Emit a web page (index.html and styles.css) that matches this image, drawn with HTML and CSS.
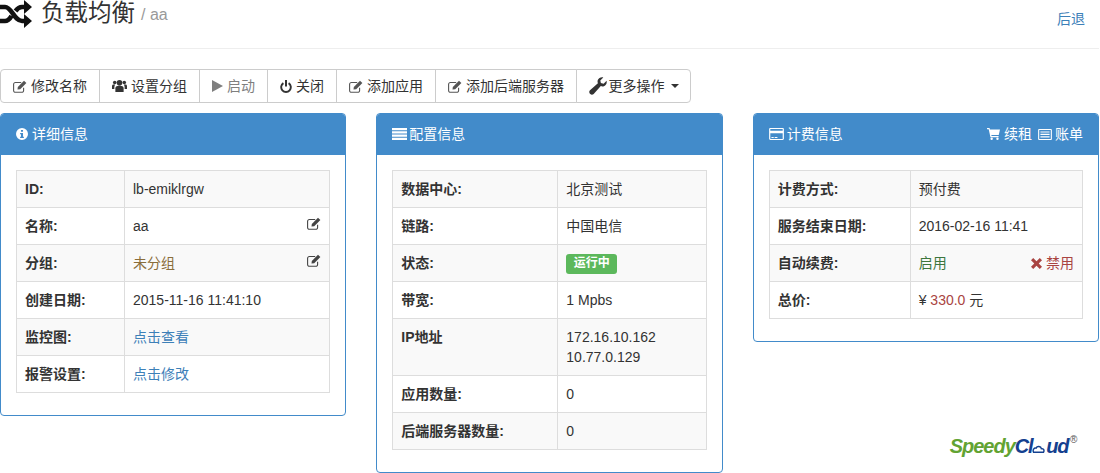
FILE: index.html
```html
<!DOCTYPE html>
<html lang="zh-CN">
<head>
<meta charset="utf-8">
<title>负载均衡</title>
<link rel="stylesheet" href="styles.css">
</head>
<body>
<svg class="defs" width="0" height="0" aria-hidden="true">
  <symbol id="i-edit" viewBox="0 0 14 13">
    <path d="M10.600 7.800v2.700a1.800 1.800 0 0 1-1.800 1.800H2.400a1.800 1.800 0 0 1-1.800-1.800V4.300a1.800 1.800 0 0 1 1.800-1.800h5.800" fill="none" stroke="currentColor" stroke-width="1.100"/>
    <path d="M4.800 6.900 11 .7l2.400 2.400-6.200 6.200-2.700.3z" fill="currentColor"/>
  </symbol>
  <symbol id="i-users" viewBox="0 0 16 14">
    <circle cx="8" cy="3.600" r="3"/><circle cx="2.900" cy="3.200" r="1.900"/><circle cx="13.100" cy="3.200" r="1.900"/>
    <path d="M3.600 13.500V9.600c0-1.800 1.200-2.600 2.200-2.600h4.400c1 0 2.200.8 2.200 2.600v3.900z"/>
    <path d="M0 10.300V7.200c0-1 .7-1.700 1.500-1.700h2c-.7.8-1 2-1 3.200v1.600zM16 10.300V7.200c0-1-.7-1.700-1.500-1.700h-2c.7.8 1 2 1 3.200v1.600z"/>
  </symbol>
  <symbol id="i-play" viewBox="0 0 11 12"><path d="M0 0l11 6-11 6z"/></symbol>
  <symbol id="i-power" viewBox="0 0 12 13">
    <path d="M3.400 3.100a4.800 4.800 0 1 0 5.200 0" fill="none" stroke="currentColor" stroke-width="1.900"/>
    <path d="M5 0h2v6.500H5z"/>
  </symbol>
  <symbol id="i-wrench" viewBox="0 0 18 18">
    <path d="M17.600 3.700c.5 2.500-.5 4.700-2.700 5.500-1.100.4-2.200.3-3.100-.1L4.700 17c-1 1-2.500 1-3.400.1L.9 16.700c-.9-.9-.9-2.400.1-3.400L8.900 6.200c-.4-.9-.5-2-.1-3.100C9.600 1 11.900-.1 14.300.4l-3 3 .6 2.700 2.700.6z"/>
  </symbol>
  <symbol id="i-info" viewBox="0 0 14 14">
    <path fill-rule="evenodd" d="M7 0a7 7 0 1 1 0 14A7 7 0 0 1 7 0zM5.800 2.300v2h2.400v-2zM4.800 5.700v1.500h1v3H4.800v1.500h4.400v-1.500h-1V5.700z"/>
  </symbol>
  <symbol id="i-list" viewBox="0 0 15 12">
    <path d="M0 0h15v2.200H0zM0 3.300h15v2.200H0zM0 6.600h15v2.200H0zM0 9.800h15V12H0z"/>
  </symbol>
  <symbol id="i-card" viewBox="0 0 16 13">
    <path fill-rule="evenodd" d="M1.300 0h13.400C15.400 0 16 .6 16 1.300v10.400c0 .7-.6 1.300-1.300 1.300H1.300C.6 13 0 12.400 0 11.700V1.300C0 .6.600 0 1.300 0zM1.300 1.200v1.800h13.400V1.200zM1.300 5.800v6h13.400v-6zM2.500 9.800h2.500v1H2.500zM6 9.800h3v1H6z"/>
  </symbol>
  <symbol id="i-cart" viewBox="0 0 14 13">
    <path d="M0 0h2.700l.4 1.500H14l-1.300 6H4.600l.3 1.300h7.600v1.300H3.700L1.800 1.300H0z"/>
    <circle cx="5" cy="11.700" r="1.300"/><circle cx="11.300" cy="11.700" r="1.300"/>
  </symbol>
  <symbol id="i-bill" viewBox="0 0 15 12">
    <path fill-rule="evenodd" d="M1 0h13c.6 0 1 .4 1 1v10c0 .6-.4 1-1 1H1c-.6 0-1-.4-1-1V1c0-.6.4-1 1-1zM1.200 1.200v9.600h12.600V1.200zM2.500 2.600h10v1.300h-10zM2.500 5.300h10v1.300h-10zM2.500 8h10v1.300h-10z"/>
  </symbol>
  <symbol id="i-times" viewBox="0 0 11 11">
    <path d="M0 2.200 2.200 0l3.300 3.300L8.800 0 11 2.200 7.700 5.500 11 8.800 8.800 11 5.500 7.700 2.200 11 0 8.800 3.300 5.500z"/>
  </symbol>
</svg>

<header class="page-header">
  <h1 class="page-title">
    <svg class="shuffle" viewBox="0 0 32 28" aria-hidden="true">
      <path d="M0 7h5c7 0 9 14 17 14h3M0 21h5c3 0 5-2.500 6.500-5M15.500 11c1.500-2 3.500-4 6.500-4h3" fill="none" stroke="currentColor" stroke-width="4.600"/>
      <path d="M24 0l8 7-8 7zM24 14l8 7-8 7z" fill="currentColor"/>
    </svg>
    <span>负载均衡</span><small class="crumb">/ aa</small>
  </h1>
  <a class="link logout" href="#">后退</a>
</header>

<nav class="toolbar">
  <a class="btn w-a" href="#"><svg class="ic ic-edit"><use href="#i-edit"/></svg>修改名称</a>
  <a class="btn w-b" href="#"><svg class="ic ic-users"><use href="#i-users"/></svg>设置分组</a>
  <a class="btn w-c disabled" href="#"><svg class="ic ic-play"><use href="#i-play"/></svg>启动</a>
  <a class="btn w-d" href="#"><svg class="ic ic-power"><use href="#i-power"/></svg>关闭</a>
  <a class="btn w-a" href="#"><svg class="ic ic-edit"><use href="#i-edit"/></svg>添加应用</a>
  <a class="btn w-e" href="#"><svg class="ic ic-edit"><use href="#i-edit"/></svg>添加后端服务器</a>
  <a class="btn w-f" href="#"><svg class="ic ic-wrench"><use href="#i-wrench"/></svg>更多操作<span class="caret"></span></a>
</nav>

<main class="panels">
  <section class="panel">
    <h2 class="panel-heading"><span class="heading-main"><svg class="ic ic-info"><use href="#i-info"/></svg>详细信息</span></h2>
    <div class="panel-body">
      <table class="info col-108">
        <tr><th>ID:</th><td>lb-emiklrgw</td></tr>
        <tr><th>名称:</th><td>aa<a class="cell-edit" href="#"><svg class="ic ic-edit-cell"><use href="#i-edit"/></svg></a></td></tr>
        <tr><th>分组:</th><td><span class="warn">未分组</span><a class="cell-edit" href="#"><svg class="ic ic-edit-cell"><use href="#i-edit"/></svg></a></td></tr>
        <tr><th>创建日期:</th><td>2015-11-16 11:41:10</td></tr>
        <tr><th>监控图:</th><td><a class="link" href="#">点击查看</a></td></tr>
        <tr><th>报警设置:</th><td><a class="link" href="#">点击修改</a></td></tr>
      </table>
    </div>
  </section>

  <section class="panel">
    <h2 class="panel-heading"><span class="heading-main"><svg class="ic ic-list"><use href="#i-list"/></svg>配置信息</span></h2>
    <div class="panel-body">
      <table class="info col-165">
        <tr><th>数据中心:</th><td>北京测试</td></tr>
        <tr><th>链路:</th><td>中国电信</td></tr>
        <tr><th>状态:</th><td><span class="badge">运行中</span></td></tr>
        <tr><th>带宽:</th><td>1 Mpbs</td></tr>
        <tr><th>IP地址</th><td>172.16.10.162<br>10.77.0.129</td></tr>
        <tr><th>应用数量:</th><td>0</td></tr>
        <tr><th>后端服务器数量:</th><td>0</td></tr>
      </table>
    </div>
  </section>

  <section class="panel">
    <h2 class="panel-heading">
      <span class="heading-main"><svg class="ic ic-card"><use href="#i-card"/></svg>计费信息</span>
      <span class="heading-actions">
        <a href="#"><svg class="ic ic-cart"><use href="#i-cart"/></svg>续租</a>
        <a href="#"><svg class="ic ic-bill"><use href="#i-bill"/></svg>账单</a>
      </span>
    </h2>
    <div class="panel-body">
      <table class="info col-141">
        <tr><th>计费方式:</th><td>预付费</td></tr>
        <tr><th>服务结束日期:</th><td>2016-02-16 11:41</td></tr>
        <tr><th>自动续费:</th><td><span class="ok">启用</span><a class="danger-action" href="#"><svg class="ic ic-times"><use href="#i-times"/></svg>禁用</a></td></tr>
        <tr><th>总价:</th><td>¥ <span class="price">330.0</span> 元</td></tr>
      </table>
    </div>
    <div class="logo"><span class="logo-green">Speedy</span><span class="logo-blue">Cl<svg class="logo-cloud" viewBox="0 0 14 10" aria-hidden="true"><path d="M1.500 9.200h11c1.500-2.500-.3-4.400-2.300-4-.5-2.800-4.800-3.400-5.900-.6C2 4 .300 6.800 1.500 9.200z" fill="none" stroke="currentColor" stroke-width="1.600"/></svg>ud</span><sup class="logo-reg">®</sup></div>
  </section>
</main>
</body>
</html>
```

FILE: styles.css
```css
* { box-sizing: border-box; }

html, body {
  margin: 0;
  height: 473px;
  overflow: hidden;
  background: #fff;
}

body {
  width: 1099px;
  font-family: "Liberation Sans", "Noto Sans CJK SC", sans-serif;
  font-size: 14px;
  line-height: 20px;
  color: #333;
}

a { text-decoration: none; }

.defs { position: absolute; }

.ic {
  display: inline-block;
  fill: currentColor;
  flex: none;
}

.link { color: #3d80b8; }

/* header */
.page-header {
  display: flex;
  justify-content: space-between;
  align-items: flex-start;
  height: 49px;
  border-bottom: 1px solid #eee;
  padding-right: 14px;
}

.page-title {
  display: flex;
  align-items: flex-start;
  margin: 0;
  font-size: 23.5px;
  line-height: 26px;
  font-weight: 400;
  color: #333;
}

.shuffle {
  width: 32px;
  height: 28px;
  margin-right: 9px;
  color: #111;
}

.crumb {
  margin: 2px 0 0 6px;
  font-size: 16px;
  line-height: 26px;
  color: #999;
}

.logout { margin-top: 9px; }

/* toolbar */
.toolbar {
  display: flex;
  width: 691px;
  height: 34px;
  margin-top: 20px;
}

.btn {
  display: flex;
  align-items: center;
  justify-content: center;
  height: 34px;
  margin-left: -1px;
  background: #fff;
  border: 1px solid #ccc;
  color: #333;
}

.btn:first-child { margin-left: 0; border-radius: 4px 0 0 4px; }
.btn:last-child { border-radius: 0 4px 4px 0; }
.btn.disabled { color: #7f7f7f; }

.w-a { width: 100px; }
.w-b { width: 101px; }
.w-c { width: 69px; }
.w-d { width: 70px; }
.w-e { width: 142px; }
.w-f { width: 115px; }

.ic-edit { width: 14px; height: 13px; margin-right: 4px; color: #555; }
.ic-users { width: 15px; height: 14px; margin-right: 4px; }
.ic-play { width: 11px; height: 12px; margin-right: 4px; }
.ic-power { width: 12px; height: 13px; margin-right: 4px; }
.ic-wrench { width: 18px; height: 18px; margin-right: 2px; }

.caret {
  width: 0;
  height: 0;
  margin-left: 6px;
  border-top: 4px solid #333;
  border-left: 4px solid transparent;
  border-right: 4px solid transparent;
}

/* panels */
.panels {
  display: grid;
  grid-template-columns: repeat(3, 1fr);
  column-gap: 30px;
  align-items: start;
  margin-top: 10px;
}

.panel {
  position: relative;
  border: 1px solid #428bca;
  border-radius: 4px;
  background: #fff;
}

.panel-heading {
  display: flex;
  justify-content: space-between;
  margin: 0;
  height: 41px;
  padding: 10px 15px 11px;
  border-radius: 3px 3px 0 0;
  background: #428bca;
  color: #fff;
  font-size: 14px;
  font-weight: 400;
  line-height: 20px;
}

.heading-main { display: flex; align-items: center; }

.heading-actions { display: flex; align-items: center; gap: 6px; }
.heading-actions a { display: flex; align-items: center; color: #fff; }

.ic-info { width: 12px; height: 12px; margin-right: 4px; }
.ic-list { width: 15px; height: 12px; margin-right: 2px; }
.ic-card { width: 15px; height: 12px; margin-right: 3px; }
.ic-cart { width: 13px; height: 12px; margin-right: 4px; }
.ic-bill { width: 14px; height: 11px; margin-right: 3px; }

.panel-body { padding: 15px 15px 22px; }

/* tables */
.info {
  width: 100%;
  table-layout: fixed;
  border-collapse: collapse;
}

.info th, .info td {
  padding: 8px;
  border: 1px solid #ddd;
  text-align: left;
  vertical-align: top;
}

.info th { font-weight: 700; }
.info tr:nth-child(odd) { background: #f9f9f9; }

.col-108 th { width: 108px; }
.col-165 th { width: 165px; }
.col-141 th { width: 141px; }

.cell-edit { float: right; margin: 1px 0 0; color: #444; line-height: 0; }
.ic-edit-cell { width: 14px; height: 13px; }

.warn { color: #8a6d3b; }
.ok { color: #3c763d; }
.price { color: #a94442; }

.badge {
  display: block;
  width: 51px;
  height: 20px;
  margin: 1px 0 -1px;
  border-radius: 3px;
  background: #5cb85c;
  color: #fff;
  font-size: 12px;
  font-weight: 700;
  line-height: 19px;
  text-align: center;
}

.danger-action {
  float: right;
  display: flex;
  align-items: center;
  color: #a94442;
}

.ic-times { width: 11px; height: 11px; margin-right: 4px; }

/* logo in the free space below the third panel */
.logo {
  position: absolute;
  left: 196px;
  top: 319px;
  display: flex;
  align-items: baseline;
  white-space: nowrap;
  font-family: "Liberation Sans", sans-serif;
  font-size: 20px;
  line-height: 26px;
  font-style: italic;
  font-weight: 700;
  letter-spacing: -1px;
}

.logo-green { color: #62a332; }
.logo-blue { color: #14408f; letter-spacing: -1.3px; }

.logo-cloud {
  display: inline-block;
  width: 13px;
  height: 9px;
  margin: 0 1px 0 0;
}

.logo-reg {
  align-self: flex-start;
  margin-left: 2px;
  font-size: 10px;
  line-height: 14px;
  font-style: normal;
  font-weight: 400;
  color: #555;
}
```
